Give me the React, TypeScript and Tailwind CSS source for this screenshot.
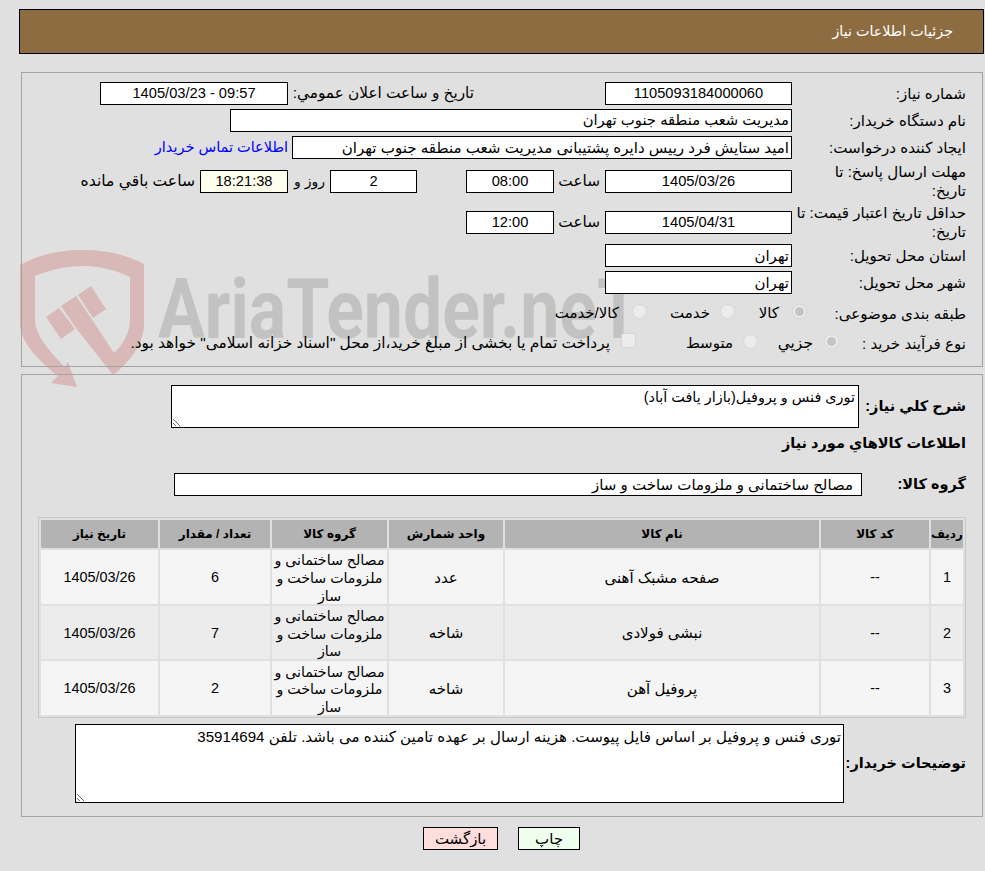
import React from 'react';

const inputBase = 'h-[23px] bg-white border border-black flex items-center text-black leading-none shrink-0';
const digits = 'text-[14.67px]';

const Label = ({ w, bold, children }: { w: string; bold?: boolean; children: React.ReactNode }) => (
  <div className={`${w} shrink-0 leading-[19px] ${bold ? 'font-bold text-[14.5px] whitespace-nowrap' : 'text-[15.1px]'}`}>{children}</div>
);

const Radio = ({ checked }: { checked?: boolean }) => (
  <span className="w-[15px] h-[15px] rounded-full bg-[#ececec] border border-[#d6d6d6] flex items-center justify-center shrink-0 -mt-[4px]">
    {checked && <span className="w-[9px] h-[9px] rounded-full bg-[#c4c4c4]" />}
  </span>
);

const DateRow = ({ date, time }: { date: string; time: string }) => (
  <>
    <div className={`${inputBase} ${digits} w-[187px] justify-center`}>{date}</div>
    <div className="w-[51px] pr-[5px] shrink-0 text-[15.3px]">ساعت</div>
    <div className={`${inputBase} ${digits} w-[88px] justify-center`}>{time}</div>
  </>
);

const rows = [
  { id: 1, name: 'صفحه مشبک آهنی', unit: 'عدد', qty: '6', bg: 'bg-[#f5f5f5]' },
  { id: 2, name: 'نبشی فولادی', unit: 'شاخه', qty: '7', bg: 'bg-[#ececec]' },
  { id: 3, name: 'پروفیل آهن', unit: 'شاخه', qty: '2', bg: 'bg-[#f5f5f5]' },
];

const Watermark = () => (
  <div className="absolute left-[15px] top-[240px] w-[630px] h-[160px] pointer-events-none">
    <svg width="150" height="160" viewBox="0 0 150 160" className="absolute left-0 top-0">
      <path
        fill="#d9b8b8"
        d="M5,25 C25,14 45,10 68,10 C90,10 110,14 129,24 L129,88 C127,105 115,122 98,135 L61,88 L46,66 L61,56 L76,78 L99,113 C108,105 115,92 115,80 L115,37 C100,30 85,26 68,26 C50,26 35,30 20,36 L20,80 C20,95 35,112 50,127 L53,122 L62,147 L36,143 L43,136 C20,118 5,100 5,83 Z"
      />
      <path fill="#d9b8b8" d="M31,77 L44,68 L60,89 L46,99 Z M63,55 L76,46 L91,69 L78,78 Z" />
    </svg>
    <div
      dir="ltr"
      className="absolute left-[143px] top-[20px] origin-left scale-x-[0.83] whitespace-nowrap text-[84px] leading-[100px] font-bold text-[#c2c2c2] font-['Roboto',sans-serif]"
    >
      AriaTender.neT
    </div>
  </div>
);

export default function App() {
  return (
    <div
      dir="rtl"
      className="relative w-full min-h-[871px] bg-[#e0e0e0] pt-[9px] text-[15px] text-black font-['Liberation_Sans','DejaVu_Sans',sans-serif]"
    >
      <Watermark />

      <div className="relative h-[45px] ml-[19px] mr-[1px] bg-[#8d6c42] border border-black flex items-center pr-[30px] text-white text-[14.3px]">
        جزئیات اطلاعات نیاز
      </div>

      <section className="relative mt-[18px] ml-[21px] mr-[2px] h-[295px] border border-[#a3a3a3] pr-[16px] pt-[9px]">
        <div className="flex items-center h-[23px]">
          <Label w="w-[174px]">شماره نیاز:</Label>
          <div className={`${inputBase} ${digits} w-[187px] justify-center`}>1105093184000060</div>
          <div className="w-[317px] pr-[131px] shrink-0 whitespace-nowrap text-[15.3px]">تاریخ و ساعت اعلان عمومي:</div>
          <div className={`${inputBase} ${digits} w-[188px] justify-center`}>09:57 - 1405/03/23</div>
        </div>

        <div className="flex items-center h-[23px] mt-[4px]">
          <Label w="w-[174px]">نام دستگاه خریدار:</Label>
          <div className={`${inputBase} w-[562px] pr-[2px] text-[14.8px]`}>مدیریت شعب منطقه جنوب تهران</div>
        </div>

        <div className="flex items-center h-[23px] mt-[4px]">
          <Label w="w-[174px]">ایجاد کننده درخواست:</Label>
          <div className={`${inputBase} w-[500px] pr-[2px] text-[15.1px]`}>امید ستایش فرد رییس دایره پشتیبانی مدیریت شعب منطقه جنوب تهران</div>
          <a className="pr-[4px] text-[#0000ff] whitespace-nowrap text-[14.5px]">اطلاعات تماس خریدار</a>
        </div>

        <div className="flex items-center h-[38px] mt-[3px]">
          <Label w="w-[174px]">مهلت ارسال پاسخ: تا<br />تاریخ:</Label>
          <DateRow date="1405/03/26" time="08:00" />
          <div className="w-[49px] shrink-0" />
          <div className={`${inputBase} ${digits} w-[87px] justify-center`}>2</div>
          <div className="w-[42px] pr-[5px] shrink-0 whitespace-nowrap text-[14px]">روز و</div>
          <div className={`${inputBase} ${digits} w-[88px] justify-center !bg-[#ffffee]`}>18:21:38</div>
          <div className="pr-[5px] whitespace-nowrap text-[15.6px]">ساعت باقي مانده</div>
        </div>

        <div className="flex items-center h-[38px] mt-[3px]">
          <Label w="w-[174px]">حداقل تاریخ اعتبار قیمت: تا<br />تاریخ:</Label>
          <DateRow date="1405/04/31" time="12:00" />
        </div>

        <div className="flex items-center h-[23px] mt-[3px]">
          <Label w="w-[174px]">استان محل تحویل:</Label>
          <div className={`${inputBase} w-[187px] pr-[2px]`}>تهران</div>
        </div>

        <div className="flex items-center h-[23px] mt-[4px]">
          <Label w="w-[174px]">شهر محل تحویل:</Label>
          <div className={`${inputBase} w-[187px] pr-[2px]`}>تهران</div>
        </div>

        <div className="flex items-center h-[30px] mt-[4px]">
          <Label w="w-[159px]">طبقه بندی موضوعی:</Label>
          <div className="w-[72px] shrink-0 flex items-center gap-[13px]"><Radio checked />کالا</div>
          <div className="w-[88px] shrink-0 flex items-center gap-[10px]"><Radio />خدمت</div>
          <div className="flex items-center gap-[13px]"><Radio />کالا/خدمت</div>
        </div>

        <div className="flex items-center h-[30px]">
          <Label w="w-[127px]">نوع فرآیند خرید :</Label>
          <div className="w-[81px] shrink-0 flex items-center gap-[11px] text-[15.5px]"><Radio checked />جزیي</div>
          <div className="w-[122px] shrink-0 flex items-center gap-[10px]"><Radio />متوسط</div>
          <div className="flex items-center gap-[11px] whitespace-nowrap text-[15.4px]">
            <span className="w-[15px] h-[15px] rounded-[3px] bg-[#ececec] border border-[#d6d6d6] shrink-0 -mt-[4px]" />
            پرداخت تمام یا بخشی از مبلغ خرید،از محل "اسناد خزانه اسلامی" خواهد بود.
          </div>
        </div>
      </section>

      <section className="relative mt-[7px] ml-[21px] mr-[2px] h-[443px] border border-[#a3a3a3] pr-[16px] pt-[10px]">
        <div className="flex items-center h-[43px]">
          <Label w="w-[107px]" bold>شرح کلي نیاز:</Label>
          <textarea
            readOnly
            defaultValue="توری فنس و پروفیل(بازار یافت آباد)"
            className="w-[688px] h-[43px] bg-white border border-black pr-[3px] pl-[2px] pt-[3px] leading-[17px] text-[14.4px] outline-none"
          />
        </div>

        <div className="h-[19px] mt-[6px] leading-[19px] font-bold text-[14.5px]">اطلاعات کالاهاي مورد نیاز</div>

        <div className="flex items-center h-[23px] mt-[20px]">
          <Label w="w-[104px]" bold>گروه کالا:</Label>
          <div className={`${inputBase} w-[688px] pr-[8px]`}>مصالح ساختمانی و ملزومات ساخت و ساز</div>
        </div>

        <table className="mt-[21px] w-[928px] table-fixed border-separate border-spacing-[2px] border border-[#c8c8c8] text-center text-[15px]">
          <thead>
            <tr className="h-[28px] bg-[#b3b3b3] text-[12px] font-bold">
              <th className="w-[32px] font-bold">ردیف</th>
              <th className="w-[108px] font-bold">کد کالا</th>
              <th className="w-[314px] font-bold">نام کالا</th>
              <th className="w-[114px] font-bold">واحد شمارش</th>
              <th className="w-[115px] font-bold">گروه کالا</th>
              <th className="w-[110px] font-bold">تعداد / مقدار</th>
              <th className="font-bold">تاریخ نیاز</th>
            </tr>
          </thead>
          <tbody>
            {rows.map((r) => (
              <tr key={r.id} className={`${r.bg} h-[53.6px]`}>
                <td className="text-[14.4px] pt-[2px]">{r.id}</td>
                <td className="text-[14.4px] pt-[2px]">--</td>
                <td className="pt-[2px]">{r.name}</td>
                <td className="pt-[2px]">{r.unit}</td>
                <td className="leading-[17.6px] text-[14.2px] whitespace-nowrap">
                  <div className="translate-y-[2px]">مصالح ساختمانی و<br />ملزومات ساخت و<br />ساز</div>
                </td>
                <td className="text-[14.4px] pt-[2px]">{r.qty}</td>
                <td className="text-[14.4px] pt-[2px]">1405/03/26</td>
              </tr>
            ))}
          </tbody>
        </table>

        <div className="flex items-center h-[79px] mt-[6px]">
          <Label w="w-[122px]" bold>توضیحات خریدار:</Label>
          <textarea
            readOnly
            defaultValue="توری فنس و پروفیل بر اساس فایل پیوست. هزینه ارسال بر عهده تامین کننده می باشد. تلفن 35914694"
            className="w-[769px] h-[79px] bg-white border border-black px-[2px] pt-[3px] leading-[17px] text-[15.1px] outline-none"
          />
        </div>
      </section>

      <div className="relative flex gap-[20px] mt-[10px] pr-[405px]">
        <button className="w-[62px] h-[23px] bg-[#eeffee] border border-black">چاپ</button>
        <button className="w-[75px] h-[23px] bg-[#ffdddd] border border-black">بازگشت</button>
      </div>
    </div>
  );
}
